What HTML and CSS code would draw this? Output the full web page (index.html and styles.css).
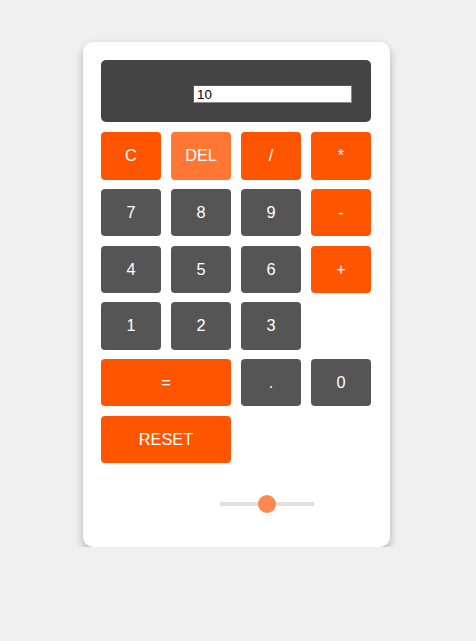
FILE: index.html
```html
<!DOCTYPE html>
<html lang="en">
<head>
<meta charset="utf-8">
<title>Calculator</title>
<link rel="stylesheet" href="styles.css">
</head>
<body>
<div class="calculator">
  <div class="display">
    <input class="screen" type="text" value="10" readonly>
  </div>
  <div class="keys">
    <button class="key op">C</button>
    <button class="key op light">DEL</button>
    <button class="key op">/</button>
    <button class="key op">*</button>
    <button class="key">7</button>
    <button class="key">8</button>
    <button class="key">9</button>
    <button class="key op">-</button>
    <button class="key">4</button>
    <button class="key">5</button>
    <button class="key">6</button>
    <button class="key op">+</button>
    <button class="key">1</button>
    <button class="key">2</button>
    <button class="key">3</button>
    <span class="blank"></span>
    <button class="key op wide">=</button>
    <button class="key">.</button>
    <button class="key">0</button>
    <button class="key op wide">RESET</button>
  </div>
  <div class="slider-row">
    <input class="slider" type="range" min="0" max="100" value="50">
  </div>
</div>
</body>
</html>
```

FILE: styles.css
```css
html, body {
  margin: 0;
  padding: 0;
  background: #f0f0f0;
  font-family: "Liberation Sans", Arial, sans-serif;
}

body {
  padding-top: 42px;
}

.calculator {
  box-sizing: border-box;
  width: 307px;
  margin-left: 83px;
  padding: 18px 19px 18px 18px;
  background: #ffffff;
  border-radius: 10px;
  box-shadow: 0 4px 8px rgba(0, 0, 0, 0.28);
}

.display {
  box-sizing: border-box;
  height: 62px;
  background: #444444;
  border-radius: 5px;
  padding: 25px 19px 19px 92px;
  display: flex;
}

.screen {
  box-sizing: border-box;
  width: 159px;
  height: 18px;
  margin: 0;
  padding: 0 0 0 3px;
  border: 1px solid;
  border-color: #5a5a5a #8a8a8a #8a8a8a #5a5a5a;
  border-radius: 0;
  background: #ffffff;
  color: #000000;
  font-family: "Liberation Sans", Arial, sans-serif;
  font-size: 13.33px;
  outline: none;
}

.keys {
  margin-top: 10.33px;
  display: grid;
  grid-template-columns: repeat(4, 60px);
  grid-auto-rows: 47.33px;
  column-gap: 10px;
  row-gap: 9.33px;
}

.key {
  margin: 0;
  padding: 0;
  border: none;
  border-radius: 4px;
  background: #555555;
  color: #ffffff;
  font-family: "Liberation Sans", Arial, sans-serif;
  font-size: 16.3px;
  cursor: pointer;
}

.key.op {
  background: #ff5500;
}

.key.op.light {
  background: #ff7733;
}

.key.wide {
  grid-column: span 2;
}

.slider-row {
  margin-top: 31.67px;
  margin-bottom: 16px;
  height: 18px;
  display: flex;
  justify-content: flex-end;
  padding-right: 57.5px;
}

.slider {
  -webkit-appearance: none;
  appearance: none;
  width: 94px;
  height: 18px;
  margin: 0;
  padding: 0;
  background: transparent;
  outline: none;
}

.slider::-webkit-slider-runnable-track {
  height: 4px;
  background: #e0e0e0;
  border-radius: 0;
}

.slider::-webkit-slider-thumb {
  -webkit-appearance: none;
  appearance: none;
  width: 18px;
  height: 18px;
  margin-top: -7px;
  border-radius: 50%;
  background: #ff8850;
  border: none;
}
```
